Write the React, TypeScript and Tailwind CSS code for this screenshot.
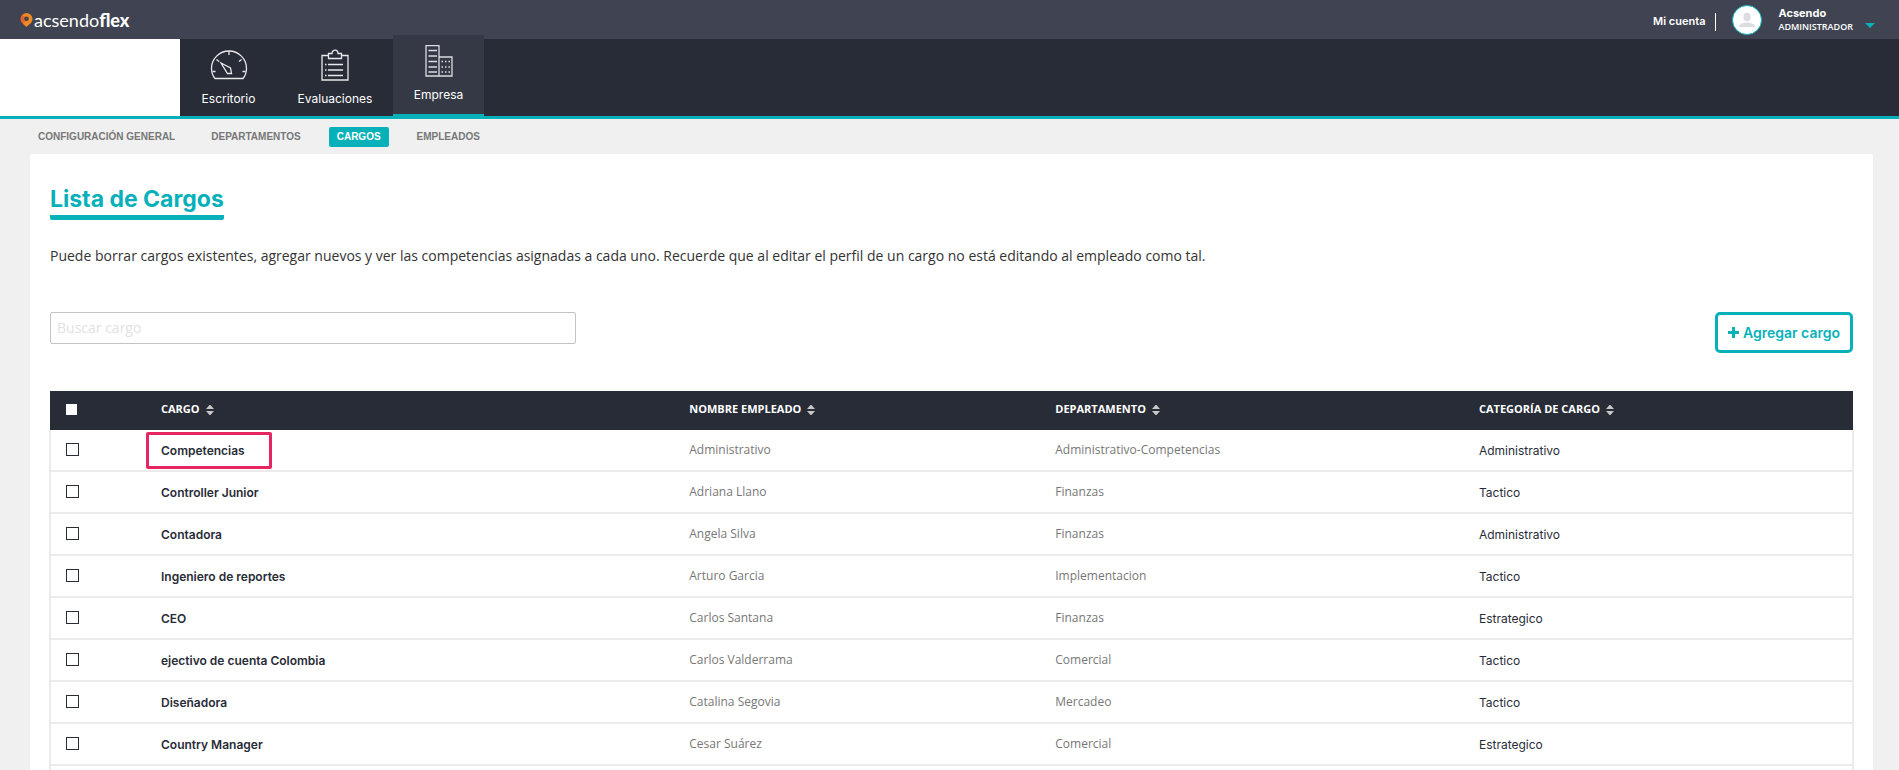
import React, { useState } from 'react';
import clsx from 'clsx';

interface Cargo {
  name: string;
  employee: string;
  department: string;
  category: string;
  highlighted?: boolean;
}

const CARGOS: Cargo[] = [
  { name: 'Competencias', employee: 'Administrativo', department: 'Administrativo-Competencias', category: 'Administrativo', highlighted: true },
  { name: 'Controller Junior', employee: 'Adriana Llano', department: 'Finanzas', category: 'Tactico' },
  { name: 'Contadora', employee: 'Angela Silva', department: 'Finanzas', category: 'Administrativo' },
  { name: 'Ingeniero de reportes', employee: 'Arturo Garcia', department: 'Implementacion', category: 'Tactico' },
  { name: 'CEO', employee: 'Carlos Santana', department: 'Finanzas', category: 'Estrategico' },
  { name: 'ejectivo de cuenta Colombia', employee: 'Carlos Valderrama', department: 'Comercial', category: 'Tactico' },
  { name: 'Diseñadora', employee: 'Catalina Segovia', department: 'Mercadeo', category: 'Tactico' },
  { name: 'Country Manager', employee: 'Cesar Suárez', department: 'Comercial', category: 'Estrategico' },
];

const COLUMNS = [
  { label: 'CARGO', width: 'w-[29.3%]' },
  { label: 'NOMBRE EMPLEADO', width: 'w-[20.3%]' },
  { label: 'DEPARTAMENTO', width: 'w-[23.5%]' },
  { label: 'CATEGORÍA DE CARGO', width: '' },
];

const SUBNAV = ['CONFIGURACIÓN GENERAL', 'DEPARTAMENTOS', 'CARGOS', 'EMPLEADOS'];

const GaugeIcon = () => (
  <svg width="38" height="32" viewBox="0 0 38 32" fill="none" stroke="#e8e8ea" strokeWidth="1.3">
    <path d="M5 29.5C2.5 26.500 1.500 23 1.500 19.500a17.500 17.500 0 0 1 35 0c0 3.500-1 7-3.500 10z" />
    <path d="M19 2v4M6.500 10.500l2.500 2M31.500 10.500l-2.500 2M2.500 22.500h3M35.500 22.500h-3" />
    <path d="M11 14l9.500 5 1 5.500h-4z" />
  </svg>
);

const ClipboardIcon = () => (
  <svg width="28" height="32" viewBox="0 0 28 32" fill="none" stroke="#e8e8ea" strokeWidth="1.3">
    <path d="M7.500 6.500H1v24.500h26V6.500h-6.500" />
    <path d="M7.500 4.500h3.500c0-4.500 6-4.500 6 0h3.500v5h-13z" />
    <path d="M4 15.500h1.500M7 15.500h15M4 21h1.500M7 21h15M4 26.500h1.500M7 26.500h15" />
  </svg>
);

const BuildingIcon = () => (
  <svg width="28" height="32" viewBox="0 0 28 32" fill="none" stroke="#dcdce0" strokeWidth="1.3">
    <path d="M1 .700h13v30.300H1zM14 12h13v19H14z" />
    <path d="M3.500 5.500h8.500M3.500 11h8.500M3.500 16.500h8.500M3.500 22h8.500M3.500 27h8.500" />
    <path d="M16.500 16.500h9M16.500 22h9M16.500 27h9" strokeDasharray="1.500 2" />
  </svg>
);

const SortIcon = () => (
  <svg width="8" height="10" viewBox="0 0 8 10" fill="#c8c8c8">
    <path d="M3.500 0h1L8 4H0zM3.500 10h1L8 6H0z" />
  </svg>
);

const MODULES = [
  { label: 'Escritorio', icon: GaugeIcon, width: 'w-[97px]' },
  { label: 'Evaluaciones', icon: ClipboardIcon, width: 'w-[116px]' },
  { label: 'Empresa', icon: BuildingIcon, width: 'w-[91px]', active: true },
];

const TopBar = () => (
  <div className="h-[39px] bg-[#404452] flex items-center justify-between pl-5 pr-6 text-white">
    <a href="#" className="flex items-center gap-px font-['Lato'] text-lg leading-5">
      <svg width="13" height="14" viewBox="0 0 13 14">
        <path fill="#e8632a" d="M6.500 0A6 6 0 0 0 .500 6c0 3.500 3.500 5.500 6 8z" />
        <path fill="#ef8a22" d="M6.500 0a6 6 0 0 1 6 6c0 3.500-3.500 5.500-6 8L3 10.500 8.500 6 2 2z" />
        <circle cx="6.500" cy="5.800" r="2.300" fill="#404452" />
      </svg>
      <span>acsendo<b className="font-black">flex</b></span>
    </a>
    <div className="flex items-center font-['Inter']">
      <a href="#" className="text-[11px] font-semibold mt-1">Mi cuenta</a>
      <div className="w-px h-[18px] bg-white ml-2.5 mr-4 mt-1" />
      <div className="w-[30px] h-[30px] rounded-full bg-white border border-[#08b1ba] flex items-center justify-center">
        <svg width="16" height="16" viewBox="0 0 16 16" fill="#dcdde0">
          <ellipse cx="8" cy="5" rx="3.600" ry="4.300" />
          <path d="M0 15c0-3 4-4.500 8-4.500s8 1.500 8 4.500z" />
        </svg>
      </div>
      <div className="ml-4 leading-[13px]">
        <div className="text-[11px] font-bold">Acsendo</div>
        <div className="text-[9px] font-semibold font-['Open_Sans']">ADMINISTRADOR</div>
      </div>
      <button type="button" aria-label="Abrir menú" className="ml-3 mt-3">
        <svg width="10" height="5" viewBox="0 0 10 5" fill="#08b1ba"><path d="M0 0h10L5 5z" /></svg>
      </button>
    </div>
  </div>
);

export default function App() {
  const [query, setQuery] = useState('');
  const [selected, setSelected] = useState<string[]>([]);

  const rows = CARGOS.filter(c => c.name.toLowerCase().includes(query.toLowerCase()));

  const toggle = (name: string) => {
    setSelected(prev => (prev.includes(name) ? prev.filter(n => n !== name) : [...prev, name]));
  };

  return (
    <div className="h-screen overflow-hidden bg-[#f0f0f0] font-['Open_Sans',sans-serif] text-[#282c37]">
      <TopBar />

      <nav className="h-20 bg-[#282c37] border-b-3 border-[#08b1ba] flex items-stretch">
        <div className="w-[180px] bg-white" />
        {MODULES.map(({ label, icon: Icon, width, active }) => (
          <a
            key={label}
            href="#"
            className={clsx(
              "flex flex-col items-center pt-2.5 text-xs leading-4 text-white font-['Inter']",
              width,
              active && 'relative -mt-1 -mb-[3px] bg-[#353945] border-b-5 border-[#08b1ba]'
            )}
          >
            <Icon />
            <span className="mt-2.5">{label}</span>
          </a>
        ))}
      </nav>

      <div className="h-[35px] flex items-center gap-5 pl-[30px] font-['Liberation_Sans'] text-[10px] font-bold">
        {SUBNAV.map(item => (
          <a
            key={item}
            href="#"
            className={clsx('px-2 leading-5 rounded-xs', item === 'CARGOS' ? 'bg-[#08b1ba] text-white' : 'text-[#777777]')}
          >
            {item}
          </a>
        ))}
      </div>

      <main className="ml-[30px] mr-[26px] px-5 pt-[29px] bg-white rounded-xs">
        <h1 className="w-fit border-b-5 border-[#08b1ba] rounded-b-xs font-['Inter'] text-[23px] leading-8 font-bold text-[#08b1ba]">
          Lista de Cargos
        </h1>
        <p className="mt-6 text-sm leading-6 text-[#333333]">
          Puede borrar cargos existentes, agregar nuevos y ver las competencias asignadas a cada uno. Recuerde que al editar el perfil de un cargo no está editando al empleado como tal.
        </p>

        <div className="mt-11 flex items-start justify-between">
          <input
            type="text"
            aria-label="Buscar cargo"
            placeholder="Buscar cargo"
            value={query}
            onChange={e => setQuery(e.target.value)}
            className="w-[526px] h-8 px-1.5 pb-0.5 text-sm font-medium border border-[#c4c4c4] rounded-xs outline-none placeholder:text-[#e2e2e2]"
          />
          <button
            type="button"
            className="h-[41px] px-2.5 flex items-center gap-1 border-3 border-[#08b1ba] rounded-[5px] font-['Inter'] text-sm font-semibold text-[#08b1ba]"
          >
            <svg width="11" height="11" viewBox="0 0 11 11" fill="none" stroke="currentColor" strokeWidth="3">
              <path d="M5.500 0v11M0 5.500h11" />
            </svg>
            Agregar cargo
          </button>
        </div>

        <div className="mt-[38px] -mx-px">
          <table className="w-full table-fixed border-collapse text-left text-xs">
            <thead>
              <tr className="h-[39px] bg-[#282c37] text-white">
                <th className="w-[91px] pl-4 pb-0.5">
                  <input
                    type="checkbox"
                    aria-label="Seleccionar todos"
                    checked={selected.length === CARGOS.length}
                    onChange={() => setSelected(selected.length === CARGOS.length ? [] : CARGOS.map(c => c.name))}
                    className="block appearance-none w-[11px] h-[11px] bg-white checked:bg-[#08b1ba]"
                  />
                </th>
                {COLUMNS.map(col => (
                  <th key={col.label} className={clsx('pl-5 pb-0.5 text-[11px] font-bold', col.width)}>
                    <button type="button" className="flex items-center gap-1.5">
                      {col.label}
                      <SortIcon />
                    </button>
                  </th>
                ))}
              </tr>
            </thead>
            <tbody className="border-x-2 border-[#ebebeb]">
              {rows.map(cargo => (
                <tr key={cargo.name} className="h-[42px] first:h-[41px] border-b-2 border-[#ebebeb]">
                  <td className="pl-[15px] pb-0.5">
                    <input
                      type="checkbox"
                      aria-label={cargo.name}
                      checked={selected.includes(cargo.name)}
                      onChange={() => toggle(cargo.name)}
                      className="block appearance-none w-[13px] h-[13px] border border-[#282c37] checked:bg-[#08b1ba]"
                    />
                  </td>
                  <td className="pl-5 pt-0.5 font-['Inter'] font-semibold">
                    <span className="relative">
                      {cargo.name}
                      {cargo.highlighted && (
                        <span className="absolute -left-[15px] -top-[11px] w-[126px] h-[37px] border-3 border-[#e62661] rounded-xs" />
                      )}
                    </span>
                  </td>
                  <td className="pl-5 text-[#777777]">{cargo.employee}</td>
                  <td className="pl-5 text-[#777777]">{cargo.department}</td>
                  <td className="pl-5 pt-0.5 font-['Inter']">{cargo.category}</td>
                </tr>
              ))}
              <tr className="h-[42px]"><td colSpan={5} /></tr>
            </tbody>
          </table>
        </div>
      </main>
    </div>
  );
}
